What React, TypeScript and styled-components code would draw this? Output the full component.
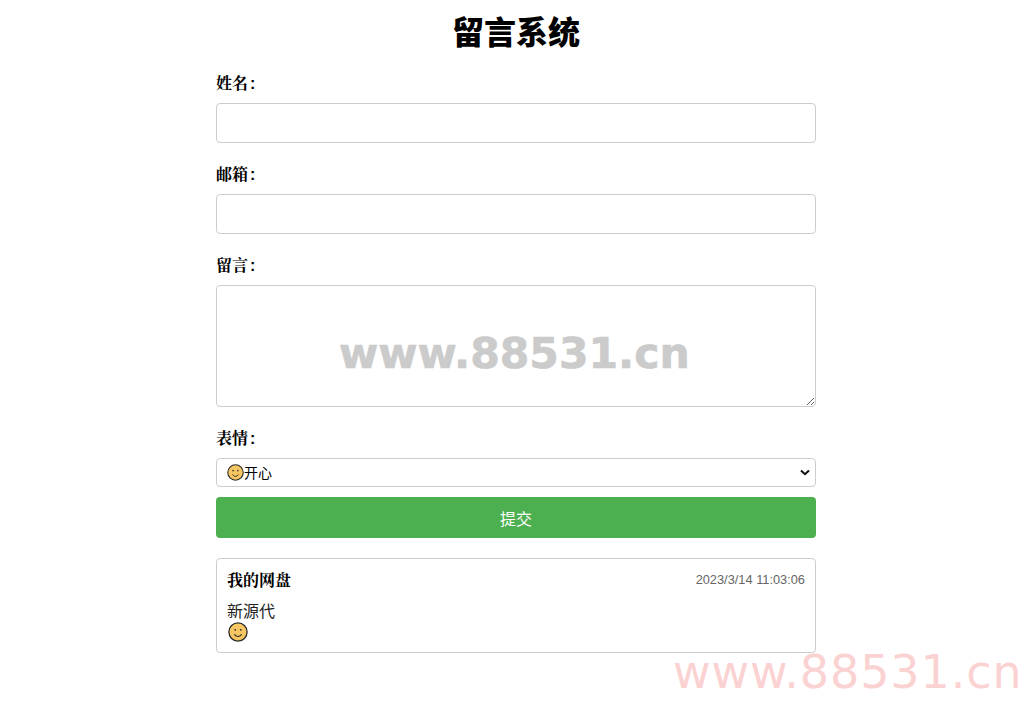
import React from "react";
import styled, { createGlobalStyle } from "styled-components";

const GlobalStyle = createGlobalStyle`
  html, body {
    margin: 0;
    padding: 0;
    background: #fff;
    overflow: hidden;
  }
  body {
    font-family: "Liberation Sans", "Noto Sans CJK SC", sans-serif;
    color: #000;
  }
`;

const Page = styled.div`
  position: relative;
  width: 1027px;
  height: 705px;
  overflow: hidden;
`;

const Container = styled.main`
  width: 600px;
  margin-left: 216px;
  display: flex;
  flex-direction: column;
`;

const Title = styled.h1`
  margin: 0;
  height: 69px;
  line-height: 60px;
  text-align: center;
  font-size: 32px;
  font-weight: 900;
  font-family: "Noto Sans CJK SC", sans-serif;
`;

const Form = styled.form`
  display: flex;
  flex-direction: column;
`;

const Field = styled.div`
  display: flex;
  flex-direction: column;
  margin-bottom: ${(p: { $gap?: number }) => p.$gap ?? 17}px;
`;

const Label = styled.label`
  display: block;
  height: 18px;
  line-height: 18px;
  margin-top: 5px;
  margin-bottom: 11px;
  font-size: 16px;
  font-weight: bold;
  font-family: "Noto Serif CJK SC", "Noto Sans CJK SC", sans-serif;
`;

const Colon = styled.span`
  margin-left: 2px;
  font-family: "Liberation Sans", sans-serif;
`;

const TextInput = styled.input`
  box-sizing: border-box;
  display: block;
  width: 100%;
  height: 40px;
  padding: 10px;
  border: 1px solid #ccc;
  border-radius: 4px;
  background: #fff;
  font-size: 16px;
  outline: none;
`;

const TextArea = styled.textarea`
  box-sizing: border-box;
  display: block;
  width: 100%;
  height: 122px;
  padding: 10px;
  border: 1px solid #ccc;
  border-radius: 4px;
  background: #fff;
  font-size: 16px;
  font-family: inherit;
  outline: none;
  resize: vertical;
`;

const SelectBox = styled.div`
  box-sizing: border-box;
  display: flex;
  align-items: center;
  height: 29px;
  padding: 0 5px 0 10px;
  border: 1px solid #ccc;
  border-radius: 4px;
  background: #fff;
  font-size: 14px;
`;

const SelectText = styled.span`
  flex: 1;
  display: flex;
  align-items: center;
  line-height: 16px;
`;

const SubmitButton = styled.button`
  display: block;
  width: 100%;
  height: 41px;
  border: none;
  border-radius: 4px;
  background: #4caf50;
  color: #fff;
  font-size: 16px;
  font-family: inherit;
`;

const Card = styled.article`
  box-sizing: border-box;
  height: 95px;
  margin-top: 20px;
  padding: 10px;
  border: 1px solid #ccc;
  border-radius: 4px;
`;

const CardHead = styled.header`
  display: flex;
  justify-content: space-between;
  align-items: flex-start;
  height: 32px;
`;

const Author = styled.strong`
  font-size: 16px;
  line-height: 22px;
  font-weight: bold;
  font-family: "Noto Serif CJK SC", "Noto Sans CJK SC", sans-serif;
`;

const Time = styled.span`
  font-size: 12.8px;
  line-height: 22px;
  color: #666;
`;

const Message = styled.p`
  margin: 0;
  font-size: 16px;
  line-height: 21px;
  color: #222;
`;

const Mood = styled.div`
  display: flex;
  height: 20px;
  padding-left: 1px;
`;

const CenterMark = styled.div`
  position: absolute;
  left: 339px;
  top: 328px;
  font-family: "DejaVu Sans", sans-serif;
  font-size: 42.5px;
  font-weight: bold;
  line-height: 52px;
  color: #cbcbcb;
  -webkit-text-stroke: 0.7px #cbcbcb;
  white-space: nowrap;
  pointer-events: none;
`;

const CornerMark = styled.div`
  position: absolute;
  left: 673px;
  top: 644px;
  font-family: "DejaVu Sans", sans-serif;
  font-size: 46px;
  line-height: 56px;
  letter-spacing: 0.9px;
  color: #fbd2d2;
  white-space: nowrap;
  pointer-events: none;
`;

function Smile({ size }: { size: number }) {
  return (
    <svg width={size} height={size} viewBox="0 0 20 20" aria-hidden="true">
      <circle cx="10" cy="10" r="9.1" fill="#f5c662" stroke="#2b2b2b" strokeWidth="1.3" />
      <circle cx="7.2" cy="7.8" r="0.9" fill="#2b2b2b" />
      <circle cx="12.8" cy="7.8" r="0.9" fill="#2b2b2b" />
      <path d="M6.6 12.6c1 1.3 2.1 1.9 3.4 1.9s2.4-.6 3.4-1.9" fill="none" stroke="#2b2b2b" strokeWidth="1.1" strokeLinecap="round" />
    </svg>
  );
}

function Chevron() {
  return (
    <svg width="10" height="7" viewBox="0 0 10 7" aria-hidden="true">
      <path d="M1 1.4 5 5.2 9 1.4" fill="none" stroke="#111" strokeWidth="2" />
    </svg>
  );
}

export default function App() {
  return (
    <Page>
      <GlobalStyle />
      <Container>
        <Title>留言系统</Title>
        <Form onSubmit={(e) => e.preventDefault()}>
          <Field>
            <Label>姓名<Colon>:</Colon></Label>
            <TextInput type="text" />
          </Field>
          <Field>
            <Label>邮箱<Colon>:</Colon></Label>
            <TextInput type="email" />
          </Field>
          <Field>
            <Label>留言<Colon>:</Colon></Label>
            <TextArea />
          </Field>
          <Field $gap={10}>
            <Label>表情<Colon>:</Colon></Label>
            <SelectBox>
              <SelectText>
                <Smile size={17} />
                开心
              </SelectText>
              <Chevron />
            </SelectBox>
          </Field>
          <SubmitButton type="submit">提交</SubmitButton>
        </Form>
        <Card>
          <CardHead>
            <Author>我的网盘</Author>
            <Time>2023/3/14 11:03:06</Time>
          </CardHead>
          <Message>新源代</Message>
          <Mood>
            <Smile size={20} />
          </Mood>
        </Card>
      </Container>
      <CenterMark>www.88531.cn</CenterMark>
      <CornerMark>www.88531.cn</CornerMark>
    </Page>
  );
}
